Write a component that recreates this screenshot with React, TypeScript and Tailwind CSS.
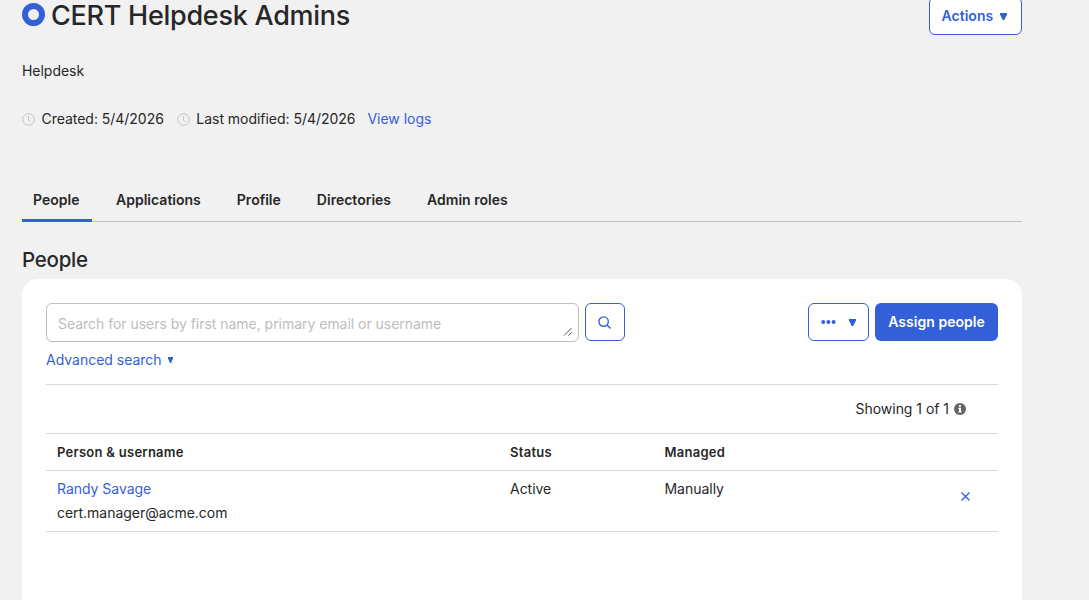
import type { ReactNode } from "react";

const tabs = [
  { label: "People", className: "w-[70px] pl-[11px]" },
  { label: "Applications", className: "ml-3 pl-[12px]" },
  { label: "Profile", className: "ml-6 pl-3" },
  { label: "Directories", className: "ml-6 pl-3" },
  { label: "Admin roles", className: "ml-6 pl-3" },
];

const people = [
  { name: "Randy Savage", username: "cert.manager@acme.com", status: "Active", managed: "Manually" },
];

export default function App() {
  return (
    <div className="h-[600px] overflow-hidden bg-[#f1f1f1] pl-[22px] font-['Inter',sans-serif] text-sm leading-6 tracking-[-0.03px] text-[#272727]">
      <main className="-mt-[3px] w-[1000px]">
        {/* Group header */}
        <header className="flex h-[38px] items-center justify-between">
          <div className="flex items-center">
            <span className="-mt-1 mr-[6px] size-[23px] rounded-full border-[6px] border-[#335fd9]" />
            <h1 className="text-[27px] leading-9 font-medium tracking-[-0.27px] whitespace-nowrap">
              CERT Helpdesk Admins
            </h1>
          </div>
          <button className="flex h-[38px] w-[93px] items-center rounded-md border border-[#335fd9] bg-white pl-[11.5px] font-semibold tracking-[0.03px] text-[#335fd9]">
            Actions
            <Caret className="ml-[7px] h-[7px] w-[7px]" />
          </button>
        </header>

        <p className="mt-6">Helpdesk</p>

        <div className="mt-6 flex items-center whitespace-nowrap">
          <Stamp>Created: 5/4/2026</Stamp>
          <span className="w-[13px]" />
          <Stamp>Last modified: 5/4/2026</Stamp>
          <a className="ml-3 text-[#335fd9]">View logs</a>
        </div>

        {/* Tabs */}
        <nav className="mt-[48px] flex h-[43px] border-b border-[#bfbfbf] font-semibold tracking-[0.01px] whitespace-nowrap">
          {tabs.map((tab, i) => (
            <div
              key={tab.label}
              className={`${tab.className} h-[43px] pt-[9px] ${i === 0 ? "border-b-[3px] border-[#335fd9]" : ""}`}
            >
              {tab.label}
            </div>
          ))}
        </nav>

        <h2 className="mt-[24px] text-[20.5px] leading-7 font-medium tracking-[-0.25px]">People</h2>

        <section className="mt-[5px] h-[340px] rounded-t-[16px] bg-white px-6 pt-6">
          {/* Search and actions */}
          <div className="flex h-[39px] items-start">
            <div className="flex h-[39px] w-[533px] items-end justify-between rounded-md border border-[#bfbfbf] pr-[6px] pl-[11px]">
              <span className="self-center pt-[2px] text-[#bdbdbd]">
                Search for users by first name, primary email or username
              </span>
              <svg className="mb-[5px] size-[9px]" viewBox="0 0 9 9" stroke="#555" strokeWidth="1">
                <path d="M1 8.5 8.5 1M5.5 8.5l3-3" />
              </svg>
            </div>
            <button className="ml-[6px] flex h-[38px] w-[40px] items-center justify-center rounded-md border border-[#335fd9] pr-[2px]">
              <svg className="size-[13px]" viewBox="0 0 13 13" fill="none" stroke="#335fd9" strokeWidth="1.4">
                <circle cx="5.6" cy="5.6" r="4.7" />
                <path d="m9 9 3.5 3.5" />
              </svg>
            </button>
            <button className="ml-auto flex h-[38px] w-[61px] items-center rounded-md border border-[#335fd9] pl-3">
              <svg className="h-1 w-[15px]" viewBox="0 0 15 4" fill="#335fd9">
                <circle cx="2.2" cy="2" r="2" />
                <circle cx="7.4" cy="2" r="2" />
                <circle cx="12.6" cy="2" r="2" />
              </svg>
              <Caret className="ml-[13px] h-[7px] w-[7px]" />
            </button>
            <button className="ml-[6px] h-[38px] w-[123px] rounded-md bg-[#335fd9] font-semibold tracking-[0.03px] whitespace-nowrap text-white">
              Assign people
            </button>
          </div>

          <div className="mt-[6px] flex h-9 text-[#335fd9]">
            <a className="flex h-6 items-center tracking-[-0.01px]">
              Advanced search
              <Caret className="ml-[6px] h-[6px] w-[5px]" />
            </a>
          </div>

          <div className="flex h-[49px] items-center justify-end border-t border-[#d9d9d9] pr-[32px]">
            Showing 1 of 1
            <svg className="ml-[5px] size-3" viewBox="0 0 12 12">
              <circle cx="6" cy="6" r="6" fill="#646464" />
              <path d="M5 2h2v1.7H5zM4.3 4.8H7v3.6h.8v1.1H4.3V8.4H5V5.9h-.7z" fill="white" />
            </svg>
          </div>

          {/* Members */}
          <table className="w-full table-fixed border-collapse text-left">
            <colgroup>
              <col className="w-[453px]" />
              <col className="w-[154px]" />
              <col className="w-[200px]" />
              <col />
            </colgroup>
            <thead>
              <tr className="h-[37px] border-y border-[#d9d9d9] text-[13px] tracking-[0.27px]">
                <th className="p-0 pl-[11px] font-semibold">Person &amp; username</th>
                <th className="p-0 pl-[11px] font-semibold">Status</th>
                <th className="p-0 pl-[11.5px] font-semibold">Managed</th>
                <th />
              </tr>
            </thead>
            <tbody>
              {people.map((person) => (
                <tr key={person.username} className="h-[61px] border-b border-[#d9d9d9] align-top">
                  <td className="pt-[6px] pl-[11px]">
                    <a className="block text-[#335fd9]">{person.name}</a>
                    {person.username}
                  </td>
                  <td className="pt-[6px] pl-[11px]">{person.status}</td>
                  <td className="pt-[6px] pl-[11.5px]">{person.managed}</td>
                  <td className="pt-[20.5px] pr-[28px]">
                    <svg className="ml-auto size-[9px]" viewBox="0 0 9 9" stroke="#335fd9" strokeWidth="1.3">
                      <path d="m.5.5 8 8m0-8-8 8" />
                    </svg>
                  </td>
                </tr>
              ))}
            </tbody>
          </table>
        </section>
      </main>
    </div>
  );
}

function Stamp({ children }: { children: ReactNode }) {
  return (
    <span className="flex items-center">
      <svg className="mr-[6.5px] size-[13px]" viewBox="0 0 13 13" fill="none" stroke="#c4c4c4">
        <circle cx="6.5" cy="6.5" r="5.8" />
        <path d="M6.5 3v4l2 2" />
      </svg>
      {children}
    </span>
  );
}

function Caret({ className }: { className: string }) {
  return (
    <svg className={className} viewBox="0 0 7 7" preserveAspectRatio="none" fill="#335fd9">
      <path d="M0 0h7v1.5L4.3 7H2.7L0 1.5z" />
    </svg>
  );
}
